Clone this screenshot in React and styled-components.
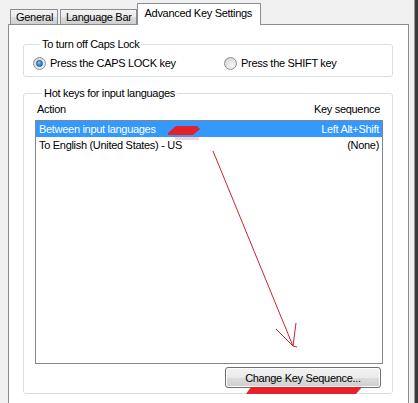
import React from 'react';
import styled, { createGlobalStyle } from 'styled-components';

const Global = createGlobalStyle`
  html, body { margin: 0; padding: 0; background: #f0f0f0; }
  body {
    font-family: "Liberation Sans", Arial, sans-serif;
    font-size: 11px;
    letter-spacing: -0.3px;
    color: #000;
  }
  #root { width: 418px; height: 403px; }
`;

const Window = styled.div`
  position: relative;
  width: 418px;
  height: 403px;
  overflow: hidden;
  background: #f0f0f0;
  display: flex;
`;

const LeftGutter = styled.div`
  width: 8px;
  flex: none;
`;

const RightGutter = styled.div`
  flex: 1;
  border-right: 3px solid #3a3a3a;
  box-shadow: inset -1px 0 0 #9a9a9a;
`;

const Dialog = styled.div`
  width: 401px;
  flex: none;
  display: flex;
  flex-direction: column;
`;

const TabStrip = styled.div`
  display: flex;
  align-items: flex-end;
  height: 24px;
  padding-left: 2px;
  position: relative;
  z-index: 1;
`;

const Tab = styled.div`
  box-sizing: border-box;
  border: 1px solid #898c95;
  border-bottom: none;
  padding: 0 ${p => (p.$active ? 8 : 4)}px 0 ${p => (p.$active ? 7 : 5)}px;
  height: ${p => (p.$active ? 22 : 15)}px;
  line-height: ${p => (p.$active ? 18 : 14)}px;
  margin-bottom: ${p => (p.$active ? -1 : 0)}px;
  margin-right: ${p => (p.$gap ? 2 : 0)}px;
  background: ${p =>
    p.$active ? '#fff' : 'linear-gradient(#f2f2f2, #ebebeb 50%, #dddddd 51%, #cfcfcf)'};
  white-space: nowrap;
`;

const Panel = styled.div`
  flex: 1;
  background: #fff;
  border: 1px solid #898c95;
  border-bottom: none;
  padding: 13px 15px 0 14px;
  display: flex;
  flex-direction: column;
`;

const GroupBox = styled.fieldset`
  margin: ${p => (p.$spaced ? '10px' : '0')} 0 0 0;
  padding: ${p => p.$pad};
  border: 1px solid #d5dfe5;
  border-radius: 3px;
  min-width: 0;
  display: flex;
  flex-direction: column;
`;

const Legend = styled.legend`
  padding: 0 2px;
  margin-left: 7px;
  line-height: 13px;
`;

const RadioRow = styled.div`
  display: grid;
  grid-template-columns: 191px 1fr;
  height: 13px;
`;

const RadioItem = styled.label`
  display: flex;
  align-items: center;
  gap: 4px;
  line-height: 13px;
`;

const RadioCircle = styled.span`
  position: relative;
  box-sizing: border-box;
  width: 13px;
  height: 13px;
  border-radius: 50%;
  border: 1px solid #8e8f8f;
  background: radial-gradient(circle at 65% 70%, #f6f6f6 0%, #e6e6e6 45%, #c9c9c9 100%);
  flex: none;
  &::after {
    content: '';
    display: ${p => (p.$checked ? 'block' : 'none')};
    position: absolute;
    left: 2px;
    top: 2px;
    width: 7px;
    height: 7px;
    box-sizing: border-box;
    border-radius: 50%;
    border: 1px solid #1b5a9e;
    background: radial-gradient(circle at 40% 35%, #8ed0ff 0%, #3a8fdc 45%, #1a5fae 100%);
  }
`;

const HeaderRow = styled.div`
  display: flex;
  justify-content: space-between;
  line-height: 13px;
  padding: 0 3px 0 2px;
  margin-top: 3px;
`;

const ListBox = styled.div`
  margin-top: 4px;
  height: 244px;
  box-sizing: border-box;
  border: 1px solid #828790;
  background: #fff;
`;

const Row = styled.div`
  display: flex;
  justify-content: space-between;
  height: 16px;
  line-height: 16px;
  padding: 0 3px;
  background: ${p => (p.$selected ? '#3399ff' : 'transparent')};
  color: ${p => (p.$selected ? '#fff' : '#000')};
`;

const ButtonRow = styled.div`
  display: flex;
  justify-content: flex-end;
  padding-right: 2px;
  margin-top: 3px;
`;

const Button = styled.button`
  box-sizing: border-box;
  width: 156px;
  height: 21px;
  border: 1px solid #707070;
  border-radius: 3px;
  background: linear-gradient(#f2f2f2, #ebebeb 50%, #dddddd 51%, #cfcfcf);
  box-shadow: inset 0 0 0 1px #fcfcfc;
  font: inherit;
  letter-spacing: inherit;
  color: #000;
  padding: 0;
`;

const Overlay = styled.svg`
  position: absolute;
  left: 0;
  top: 0;
  pointer-events: none;
`;

export default function App() {
  return (
    <>
      <Global />
      <Window>
        <LeftGutter />
        <Dialog>
          <TabStrip>
            <Tab $gap>General</Tab>
            <Tab>Language Bar</Tab>
            <Tab $active>Advanced Key Settings</Tab>
          </TabStrip>
          <Panel>
            <GroupBox $pad="6px 8px 6px 9px">
              <Legend>To turn off Caps Lock</Legend>
              <RadioRow>
                <RadioItem>
                  <RadioCircle $checked />
                  Press the CAPS LOCK key
                </RadioItem>
                <RadioItem>
                  <RadioCircle />
                  Press the SHIFT key
                </RadioItem>
              </RadioRow>
            </GroupBox>
            <GroupBox $spaced $pad="0 9px 5px 11px">
              <Legend>Hot keys for input languages</Legend>
              <HeaderRow>
                <span>Action</span>
                <span>Key sequence</span>
              </HeaderRow>
              <ListBox>
                <Row $selected>
                  <span>Between input languages</span>
                  <span>Left Alt+Shift</span>
                </Row>
                <Row>
                  <span>To English (United States) - US</span>
                  <span>(None)</span>
                </Row>
              </ListBox>
              <ButtonRow>
                <Button>Change Key Sequence...</Button>
              </ButtonRow>
            </GroupBox>
          </Panel>
        </Dialog>
        <RightGutter />
        <Overlay width="418" height="403" viewBox="0 0 418 403">
          <polygon points="168,133 176,126 197,126 200,129 193,135 168,135" fill="#e4202a" />
          <rect x="175" y="137" width="24" height="3" fill="#f4a0a6" opacity="0.5" />
          <g stroke="#c8262e" strokeWidth="1" fill="none">
            <line x1="213" y1="151" x2="293" y2="346" />
            <line x1="276" y1="329" x2="293" y2="346" />
            <line x1="296" y1="323" x2="293" y2="346" />
            <line x1="293" y1="346" x2="297" y2="347" />
          </g>
          <polygon points="251,387 362,387 356,394 246,394" fill="#e8202a" />
        </Overlay>
      </Window>
    </>
  );
}
